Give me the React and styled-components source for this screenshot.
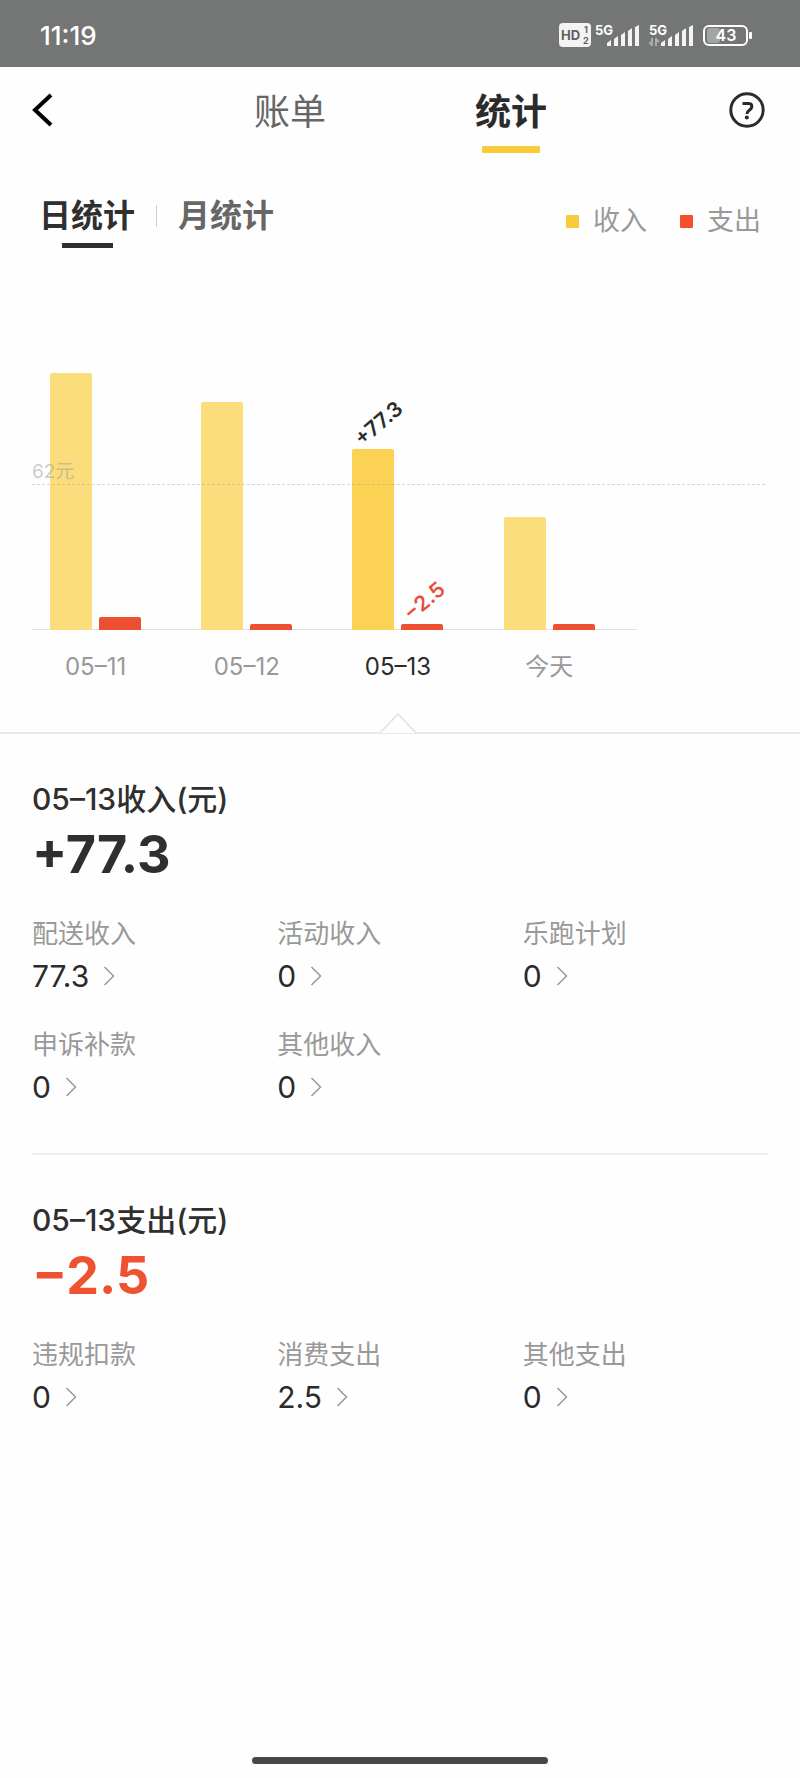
import React, { useState } from "react";
import styled, { createGlobalStyle } from "styled-components";

const days = [
  { label: "05–11", income: 257, expense: 13 },
  { label: "05–12", income: 228, expense: 6 },
  { label: "05–13", income: 181, expense: 6, incomeText: "+77.3", expenseText: "−2.5" },
  { label: "今天", income: 113, expense: 6 },
];

const incomeItems = [
  { name: "配送收入", value: "77.3" },
  { name: "活动收入", value: "0" },
  { name: "乐跑计划", value: "0" },
  { name: "申诉补款", value: "0" },
  { name: "其他收入", value: "0" },
];

const expenseItems = [
  { name: "违规扣款", value: "0" },
  { name: "消费支出", value: "2.5" },
  { name: "其他支出", value: "0" },
];

function SignalIcon({ data }) {
  return (
    <svg width="50" height="32" viewBox="0 -4 50 32" aria-hidden="true">
      <text x="0" y="12" fontSize="13" fontWeight="700" fill="#fff">
        5G
      </text>
      {data && (
        <path
          d="M3 15v8M3 22l-3-3M7 23v-8M7 16l3 3"
          stroke="#a9abaa"
          strokeWidth="2"
          fill="none"
        />
      )}
      <g fill="#f2f3f2">
        <path d="M12 20l4-3v6h-4z" />
        <path d="M19 16l4-3v10h-4z" />
        <path d="M26 12l4-3v14h-4z" />
        <path d="M33 8l4-3v18h-4z" />
        <path d="M40 4l4-2v21h-4z" />
      </g>
    </svg>
  );
}

function StatusIcons() {
  return (
    <Icons>
      <svg width="32" height="32" viewBox="0 -4 32 32" aria-hidden="true">
        <rect x="0" y="0" width="32" height="24" rx="4" fill="#f2f3f2" />
        <g fill="#5f6160" fontWeight="700">
          <text x="2" y="17" fontSize="13">
            HD
          </text>
          <text x="25" y="10" fontSize="9">
            1
          </text>
          <text x="24" y="21" fontSize="9">
            2
          </text>
        </g>
      </svg>
      <SignalIcon />
      <SignalIcon data />
      <svg width="50" height="32" viewBox="0 -4 50 32" aria-hidden="true">
        <rect x="4" y="5" width="13" height="15" rx="3" fill="#a3a5a4" />
        <rect x="1" y="3" width="43" height="19" rx="5" fill="none" stroke="#fff" strokeWidth="2" />
        <rect x="46" y="9" width="3" height="7" rx="1" fill="#fff" />
        <text x="23" y="18" fontSize="16" fontWeight="600" fill="#fff" textAnchor="middle">
          43
        </text>
      </svg>
    </Icons>
  );
}

function ItemList({ items }) {
  return (
    <ItemGrid>
      {items.map((item) => (
        <Item key={item.name} type="button">
          <ItemName>{item.name}</ItemName>
          <ItemValue>
            {item.value}
            <svg width="12" height="20" viewBox="0 0 12 20" fill="none" aria-hidden="true">
              <path d="M1.5 1l9 9-9 9" stroke="#999" strokeWidth="1.5" />
            </svg>
          </ItemValue>
        </Item>
      ))}
    </ItemGrid>
  );
}

function App() {
  const [selected, setSelected] = useState(2);

  return (
    <Page>
      <GlobalStyle />
      <StatusBar>
        <span>11:19</span>
        <StatusIcons />
      </StatusBar>

      <Header>
        <IconButton type="button" aria-label="返回">
          <svg width="22" height="34" viewBox="0 0 22 34" fill="none">
            <path d="M19 2L3 17l16 15" stroke="#000" strokeWidth="4" />
          </svg>
        </IconButton>
        <HeaderTabs>
          <HeaderTab type="button">账单</HeaderTab>
          <HeaderTab type="button" $active>
            统计
          </HeaderTab>
        </HeaderTabs>
        <IconButton type="button" aria-label="帮助" $end>
          <svg width="36" height="36" viewBox="0 0 36 36" fill="none">
            <circle cx="18" cy="18" r="16.2" stroke="#2b2b2b" strokeWidth="3" />
            <path
              d="M13.5 11.5h6c4.5 0 4 4.5 1 6.5-2 1.3-2.5 1.5-2.5 4"
              stroke="#2b2b2b"
              strokeWidth="3"
            />
            <circle cx="17.8" cy="25.5" r="2" fill="#2b2b2b" />
          </svg>
        </IconButton>
      </Header>

      <Toolbar>
        <SubTabs>
          <SubTab type="button" $active>
            日统计
          </SubTab>
          <Separator />
          <SubTab type="button">月统计</SubTab>
        </SubTabs>
        <Legend>
          <LegendItem $color="#f8cb3c">收入</LegendItem>
          <LegendItem $color="#f4502f">支出</LegendItem>
        </Legend>
      </Toolbar>

      {/* 柱状图 */}
      <Chart>
        <Average>62元</Average>
        <Axis />
        {days.map((day, i) => (
          <Day key={day.label} type="button" onClick={() => setSelected(i)}>
            <Bars>
              <Bar $color={i === selected ? "#fcd254" : "#fcdd7b"} style={{ height: day.income }}>
                {i === selected && <BarText>{day.incomeText}</BarText>}
              </Bar>
              <Bar $color="#ee4f31" style={{ height: day.expense }}>
                {i === selected && <BarText $red>{day.expenseText}</BarText>}
              </Bar>
            </Bars>
            <DayLabel $active={i === selected}>{day.label}</DayLabel>
            <Pointer $show={i === selected} width="38" height="21" viewBox="0 0 38 21">
              <path d="M1 20L19 1l18 19" fill="#fff" stroke="#e2e2e2" strokeWidth="1.5" />
            </Pointer>
          </Day>
        ))}
      </Chart>

      <Section>
        <Title>05–13收入(元)</Title>
        <Total>+77.3</Total>
        <ItemList items={incomeItems} />
      </Section>
      <Divider />
      <Section>
        <Title>05–13支出(元)</Title>
        <Total $red>−2.5</Total>
        <ItemList items={expenseItems} />
      </Section>

      <HomeBar />
    </Page>
  );
}

export default App;

const GlobalStyle = createGlobalStyle`
  * {
    box-sizing: border-box;
  }
  body {
    margin: 0;
    background: #fefefe;
    color: #2f2f2f;
    font-family: Inter, "Noto Sans CJK SC", sans-serif;
  }
  button {
    padding: 0;
    border: 0;
    background: none;
    color: inherit;
    font: inherit;
    cursor: pointer;
  }
  svg {
    display: block;
  }
`;

const Page = styled.div`
  display: flex;
  flex-direction: column;
  min-height: 100vh;
`;

const StatusBar = styled.div`
  display: flex;
  justify-content: space-between;
  align-items: center;
  height: 67px;
  padding: 3px 47px 0 40px;
  background: #747675;
  color: #fff;
  font-size: 26px;
  font-weight: 500;
`;
const Icons = styled.div`
  display: flex;
  gap: 4px;
`;

const Header = styled.header`
  display: flex;
  justify-content: space-between;
  align-items: flex-start;
  padding: 20px 35px 0 32px;
`;
const IconButton = styled.button`
  display: flex;
  align-items: center;
  justify-content: ${(props) => (props.$end ? "flex-end" : "flex-start")};
  width: ${(props) => (props.$end ? "40px" : "44px")};
  height: 46px;
`;
const HeaderTabs = styled.nav`
  display: flex;
  gap: 149px;
`;
const HeaderTab = styled.button`
  display: flex;
  flex-direction: column;
  align-items: center;
  font-size: 36px;
  line-height: 50px;
  color: ${(props) => (props.$active ? "#2b2b2b" : "#666")};
  font-weight: ${(props) => (props.$active ? 700 : 400)};

  &::after {
    content: "";
    width: 58px;
    height: 7px;
    margin-top: 9px;
    border-radius: 1px;
    background: ${(props) => (props.$active ? "#fbca3a" : "transparent")};
  }
`;

const Toolbar = styled.div`
  display: flex;
  justify-content: space-between;
  align-items: flex-start;
  padding: 42px 39px 0 39px;
`;
const SubTabs = styled.div`
  display: flex;
  align-items: flex-start;
`;
const SubTab = styled.button`
  display: flex;
  flex-direction: column;
  align-items: center;
  font-size: 32px;
  line-height: 42px;
  font-weight: 700;
  color: ${(props) => (props.$active ? "#2f2f2f" : "#666")};

  &::after {
    content: "";
    width: 51px;
    height: 5px;
    margin-top: 6px;
    background: ${(props) => (props.$active ? "#2f2f2f" : "transparent")};
  }
`;
const Separator = styled.div`
  width: 1px;
  height: 22px;
  margin: 10px 21px 0;
  background: #ccc;
`;
const Legend = styled.div`
  display: flex;
  gap: 33px;
  padding-top: 6px;
`;
const LegendItem = styled.div`
  display: flex;
  align-items: center;
  gap: 14px;
  font-size: 27px;
  line-height: 40px;
  color: #999;

  &::before {
    content: "";
    width: 13px;
    height: 13px;
    border-radius: 1px;
    background: ${(props) => props.$color};
  }
`;

// 最后一列留空
const Chart = styled.div`
  position: relative;
  display: grid;
  grid-template-columns: repeat(5, 1fr);
  padding: 125px 24px 0 20px;
  border-bottom: 2px solid #e8e8e8;
`;
const Average = styled.div`
  position: absolute;
  z-index: 1;
  left: 32px;
  right: 35px;
  bottom: 247px;
  border-bottom: 1px dashed rgba(170, 170, 170, 0.5);
  font-size: 19px;
  line-height: 24px;
  color: rgba(160, 160, 160, 0.55);
  pointer-events: none;
`;
const Axis = styled.div`
  position: absolute;
  left: 32px;
  right: 163px;
  bottom: 102px;
  border-bottom: 1px solid #e0e0e0;
`;
const Day = styled.button`
  display: flex;
  flex-direction: column;
  align-items: center;
`;
const Bars = styled.div`
  display: flex;
  align-items: flex-end;
  gap: 7px;
  height: 257px;
`;
const Bar = styled.div`
  position: relative;
  width: 42px;
  border-radius: 2px 2px 0 0;
  background: ${(props) => props.$color};
`;
const BarText = styled.span`
  position: absolute;
  left: 12px;
  bottom: 100%;
  transform: rotate(-40deg);
  transform-origin: left bottom;
  font-size: 21px;
  line-height: 20px;
  font-weight: 600;
  color: ${(props) => (props.$red ? "#e4503a" : "#2b2b2b")};
`;
const DayLabel = styled.div`
  margin-top: 19px;
  font-size: 24px;
  line-height: 36px;
  color: ${(props) => (props.$active ? "#2b2b2b" : "#999")};
`;
const Pointer = styled.svg`
  visibility: ${(props) => (props.$show ? "visible" : "hidden")};
  margin-top: 28px;
  margin-bottom: -2px;
`;

const Section = styled.section`
  padding: 43px 32px 42px;
`;
const Title = styled.h2`
  margin: 0;
  font-size: 30px;
  line-height: 44px;
  font-weight: 500;
`;
const Total = styled.div`
  margin-top: 4px;
  font-size: 52px;
  line-height: 60px;
  font-weight: 700;
  color: ${(props) => (props.$red ? "#ee5230" : "#2f2f2f")};
`;
const ItemGrid = styled.div`
  display: grid;
  grid-template-columns: repeat(3, 1fr);
  row-gap: 27px;
  margin-top: 31px;
`;
const Item = styled.button`
  text-align: left;
`;
const ItemName = styled.div`
  font-size: 26px;
  line-height: 36px;
  color: #999;
`;
const ItemValue = styled.div`
  display: flex;
  align-items: center;
  gap: 14px;
  font-size: 30px;
  line-height: 48px;
  color: #2b2b2b;
`;
const Divider = styled.div`
  height: 2px;
  margin: 0 32px;
  background: #eee;
`;

const HomeBar = styled.div`
  width: 37%;
  height: 7px;
  margin: auto auto 14px;
  border-radius: 4px;
  background: #474747;
`;
